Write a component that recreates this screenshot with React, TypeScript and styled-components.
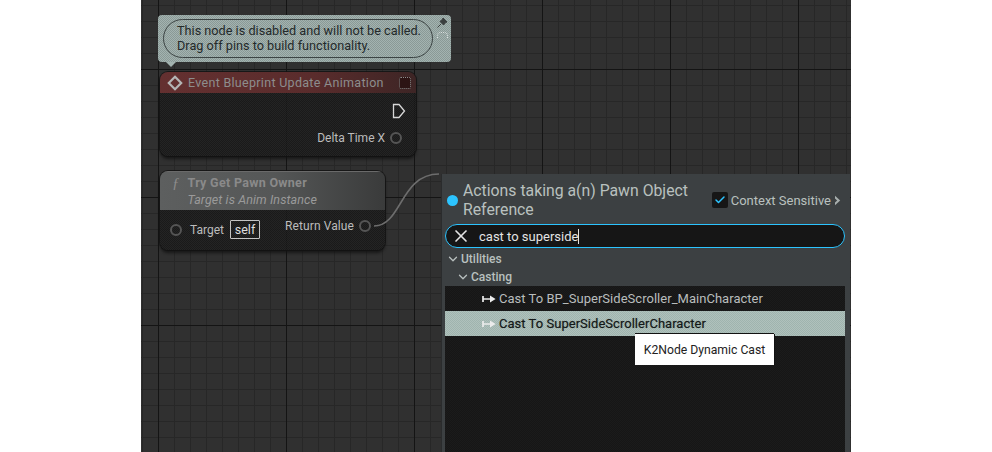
import React from "react";
import styled, { createGlobalStyle, css } from "styled-components";
import { Check, ChevronDown, X } from "lucide-react";

const GlobalStyle = createGlobalStyle`
  html, body {
    margin: 0;
    padding: 0;
    background: #fff;
    overflow: hidden;
  }
  body {
    font-family: Roboto, "Liberation Sans", sans-serif;
  }
`;

const dither = (shade: string) => css`
  background-image: repeating-conic-gradient(${shade} 0 25%, transparent 0 50%);
  background-size: 2px 2px;
`;

function ExecPin() {
  return (
    <ExecSvg width="14" height="16" viewBox="0 0 14 16">
      <path d="M1.5 1.5h5.5l5.5 6.5-5.5 6.5H1.5z" fill="none" stroke="#d8d8d8" strokeWidth="1.3" />
    </ExecSvg>
  );
}

function CastIcon() {
  return (
    <svg width="14" height="8" viewBox="0 0 14 8">
      <path d="M1 1v6M1 4h8" stroke="#ececec" strokeWidth="1.7" fill="none" />
      <path d="M8 .4 13.6 4 8 7.6z" fill="#ececec" />
    </svg>
  );
}

function EventIcon() {
  return (
    <svg width="16" height="16" viewBox="0 0 16 16">
      <path d="M8 1.8 14.2 8 8 14.2 1.8 8z" fill="none" stroke="#b4b4b4" strokeWidth="2.2" />
    </svg>
  );
}

function PinIcon() {
  return (
    <svg width="12" height="12" viewBox="0 0 12 12">
      <path d="M7 1l4 4-1.5.6L7.6 8 4 4.4 6.4 2.5zM5 7l-3.5 3.5" fill="#3b3f3f" stroke="#3b3f3f" strokeWidth="1" />
    </svg>
  );
}

function DoubleArrow() {
  return (
    <svg width="7" height="11" viewBox="0 0 7 11">
      <path d="M1 .8 6.2 5.5 1 10.2z" fill="#a8afae" />
      <path d="M1 3.4 3.2 5.5 1 7.6z" fill="#3c4042" />
    </svg>
  );
}

function Wire() {
  return (
    <WireSvg width="80" height="60" viewBox="0 0 80 60">
      <path d="M4 54C32 54 30 2 69 2" fill="none" stroke="#6d6d6d" strokeWidth="1.6" />
    </WireSvg>
  );
}

export default function App() {
  return (
    <>
      <GlobalStyle />
      <Page>
        <Canvas>
          <CommentBubble>
            <CommentPill>
              This node is disabled and will not be called.
              <br />
              Drag off pins to build functionality.
            </CommentPill>
            <CommentPin>
              <PinIcon />
              <PinBase />
            </CommentPin>
          </CommentBubble>

          <EventNode>
            <EventHeader>
              <EventIcon />
              <HeaderTitle>Event Blueprint Update Animation</HeaderTitle>
              <DelegateBox />
            </EventHeader>
            <EventBody>
              <ExecPin />
              <PinRow>
                Delta Time X <Pin />
              </PinRow>
            </EventBody>
          </EventNode>

          <FunctionNode>
            <FunctionHeader>
              <FunctionGlyph>ƒ</FunctionGlyph>
              <FunctionText>
                <FunctionTitle>Try Get Pawn Owner</FunctionTitle>
                <FunctionSub>Target is Anim Instance</FunctionSub>
              </FunctionText>
            </FunctionHeader>
            <FunctionBody>
              <TargetRow>
                <Pin /> Target <SelfTag>self</SelfTag>
              </TargetRow>
              <ReturnRow>
                Return Value <Pin />
              </ReturnRow>
            </FunctionBody>
          </FunctionNode>

          <Wire />

          <ActionMenu>
            <MenuHeader>
              <Dot />
              <MenuTitle>Actions taking a(n) Pawn Object Reference</MenuTitle>
              <ContextToggle>
                <CheckBox>
                  <Check size={12} strokeWidth={3} color="#2cc4ff" />
                </CheckBox>
                Context Sensitive
                <DoubleArrow />
              </ContextToggle>
            </MenuHeader>
            <SearchBox>
              <X size={20} strokeWidth={2} color="#e4e4e4" />
              <SearchText>cast to superside</SearchText>
              <Caret />
            </SearchBox>
            <TreeRow>
              <ChevronDown size={14} strokeWidth={2.2} />
              Utilities
            </TreeRow>
            <TreeRow $indent={10}>
              <ChevronDown size={14} strokeWidth={2.2} />
              Casting
            </TreeRow>
            <ResultList>
              <ResultRow>
                <CastIcon />
                Cast To BP_SuperSideScroller_MainCharacter
              </ResultRow>
              <ResultRow $selected>
                <CastIcon />
                Cast To SuperSideScrollerCharacter
              </ResultRow>
              <Tooltip>K2Node Dynamic Cast</Tooltip>
            </ResultList>
          </ActionMenu>
        </Canvas>
      </Page>
    </>
  );
}

const Page = styled.div`
  width: 992px;
  height: 452px;
  padding-left: 141px;
  box-sizing: border-box;
`;

const Canvas = styled.div`
  position: relative;
  width: 710px;
  height: 452px;
  overflow: hidden;
  background-color: #303030;
  background-image:
    linear-gradient(90deg, #141414 1px, transparent 1px),
    linear-gradient(#141414 1px, transparent 1px),
    linear-gradient(90deg, #272727 1px, transparent 1px),
    linear-gradient(#272727 1px, transparent 1px);
  background-size: 128px 128px, 128px 128px, 16px 16px, 16px 16px;
  background-position: 17px 0, 0 69px, 1px 0, 0 5px;
`;

const CommentBubble = styled.div`
  position: absolute;
  left: 17px;
  top: 15px;
  width: 293px;
  height: 47px;
  box-sizing: border-box;
  padding: 4px 0 0 5px;
  border-radius: 4px;
  background-color: #a3b3b0;
  ${dither("rgba(50, 60, 60, 0.22)")}

  &::after {
    content: "";
    position: absolute;
    left: 8px;
    bottom: -5px;
    border-left: 5px solid transparent;
    border-right: 5px solid transparent;
    border-top: 5px solid #a3b3b0;
  }
`;

const CommentPill = styled.div`
  width: 270px;
  height: 39px;
  box-sizing: border-box;
  padding: 3px 0 0 13px;
  border: 1px solid #3c4444;
  border-radius: 20px;
  font-size: 12.7px;
  line-height: 15px;
  color: #23292a;
  white-space: nowrap;
`;

const CommentPin = styled.div`
  position: absolute;
  right: 3px;
  top: 2px;
  display: flex;
  flex-direction: column;
  align-items: center;
  gap: 3px;
`;

const PinBase = styled.div`
  width: 9px;
  height: 5px;
  border: 1px dotted #d9dfde;
  border-bottom: none;
  border-radius: 4px 4px 0 0;
`;

const nodeShell = css`
  position: absolute;
  box-sizing: border-box;
  border-radius: 8px;
  overflow: hidden;
  background-color: rgba(22, 22, 22, 0.82);
  box-shadow: 0 0 0 1px rgba(18, 18, 18, 0.8), 0 3px 3px rgba(18, 18, 18, 0.8);
`;

const EventNode = styled.div`
  ${nodeShell}
  left: 19px;
  top: 72px;
  width: 256px;
  height: 84px;
  display: flex;
  flex-direction: column;
`;

const EventHeader = styled.div`
  display: flex;
  align-items: center;
  gap: 5px;
  height: 21px;
  padding: 0 5px 0 7px;
  background: linear-gradient(90deg, #643030 0%, #5a2c2c 60%, #3d2525 100%);
`;

const HeaderTitle = styled.span`
  flex: 1;
  font-size: 12.5px;
  letter-spacing: 0.3px;
  color: #8d8d8d;
  white-space: nowrap;
`;

const DelegateBox = styled.div`
  width: 10px;
  height: 10px;
  border: 1px dotted #8d8d8d;
  border-radius: 2px;
  background: #2c1414;
`;

const EventBody = styled.div`
  flex: 1;
  display: flex;
  flex-direction: column;
  align-items: flex-end;
  gap: 12px;
  padding: 10px 14px 0 0;
  ${dither("rgba(60, 60, 60, 0.3)")}
`;

const ExecSvg = styled.svg`
  margin-right: -4px;
`;

const PinRow = styled.div`
  display: flex;
  align-items: center;
  gap: 5px;
  font-size: 12px;
  color: #bcbcbc;
  white-space: nowrap;
`;

const TargetRow = styled(PinRow)`
  gap: 8px;
`;

const ReturnRow = styled(PinRow)`
  margin-top: -1px;
  letter-spacing: 0.1px;
`;

const Pin = styled.span`
  display: inline-block;
  width: 12px;
  height: 12px;
  box-sizing: border-box;
  border: 2px solid #555;
  border-radius: 50%;
`;

const FunctionNode = styled.div`
  ${nodeShell}
  left: 19px;
  top: 171px;
  width: 225px;
  height: 79px;
`;

const FunctionHeader = styled.div`
  display: flex;
  gap: 8px;
  height: 39px;
  box-sizing: border-box;
  padding: 3px 8px 0 12px;
  border-top: 1px solid #6a6a6a;
  background: linear-gradient(90deg, #5d5f5f 0%, #555757 50%, #3a3b3b 100%);
`;

const FunctionGlyph = styled.span`
  font-family: "Liberation Serif", serif;
  font-style: italic;
  font-size: 15px;
  color: #8c8c8c;
`;

const FunctionText = styled.div`
  display: flex;
  flex-direction: column;
  gap: 2px;
  white-space: nowrap;
`;

const FunctionTitle = styled.span`
  font-size: 12.5px;
  font-weight: 700;
  letter-spacing: 0.3px;
  color: #8a8a8a;
`;

const FunctionSub = styled.span`
  font-size: 12.5px;
  font-style: italic;
  letter-spacing: 0.1px;
  color: #9a9a9a;
`;

const FunctionBody = styled.div`
  display: flex;
  justify-content: space-between;
  align-items: flex-start;
  padding: 10px 14px 0 10px;
  ${dither("rgba(60, 60, 60, 0.3)")}
  height: 40px;
  box-sizing: border-box;
`;

const SelfTag = styled.span`
  margin-left: -2px;
  width: 30px;
  box-sizing: border-box;
  padding: 1px 0;
  text-align: center;
  border: 1px solid #c4c4c4;
  border-radius: 1px;
  font-size: 12.5px;
  line-height: 15px;
  color: #dedede;
`;

const WireSvg = styled.svg`
  position: absolute;
  left: 229px;
  top: 172px;
`;

const ActionMenu = styled.div`
  position: absolute;
  left: 300px;
  top: 174px;
  width: 409px;
  height: 278px;
  box-sizing: border-box;
  padding: 0 5px 0 3px;
  display: flex;
  flex-direction: column;
  background-color: #3c4042;
  border-left: 1px solid #2a2c2d;
`;

const MenuHeader = styled.div`
  display: flex;
  align-items: center;
  height: 50px;
  box-sizing: border-box;
  padding: 2px 0 0 2px;
`;

const Dot = styled.span`
  flex: none;
  width: 11px;
  height: 11px;
  border-radius: 50%;
  background: #2cc4ff;
  margin-right: 5px;
`;

const MenuTitle = styled.div`
  width: 248px;
  font-size: 15.8px;
  line-height: 19px;
  color: #b9c0bf;
`;

const ContextToggle = styled.div`
  display: flex;
  align-items: center;
  gap: 3px;
  margin-left: auto;
  padding-right: 4px;
  font-size: 13px;
  color: #b9c0bf;
  white-space: nowrap;
`;

const CheckBox = styled.span`
  display: flex;
  align-items: center;
  justify-content: center;
  width: 16px;
  height: 16px;
  border-radius: 2px;
  background: #161616;
`;

const SearchBox = styled.div`
  display: flex;
  align-items: center;
  height: 24px;
  box-sizing: border-box;
  padding-left: 5px;
  border: 1px solid #2cc4ff;
  border-radius: 12px;
  background: #161616;
`;

const SearchText = styled.span`
  margin-left: 8px;
  font-size: 13px;
  color: #e4e4e4;
`;

const Caret = styled.span`
  width: 1px;
  height: 15px;
  background: #e4e4e4;
`;

const TreeRow = styled.div<{ $indent?: number }>`
  display: flex;
  align-items: center;
  gap: 1px;
  height: ${(p) => (p.$indent ? 18 : 20)}px;
  padding-left: ${(p) => (p.$indent ?? 0) + 1}px;
  padding-top: ${(p) => (p.$indent ? 0 : 1)}px;
  box-sizing: border-box;
  font-size: 12px;
  font-weight: 500;
  color: #b9c0bf;
`;

const ResultList = styled.div`
  position: relative;
  flex: 1;
  background-color: #161616;
  ${dither("rgba(40, 40, 40, 0.3)")}
`;

const ResultRow = styled.div<{ $selected?: boolean }>`
  display: flex;
  align-items: center;
  gap: 3px;
  height: 25px;
  padding-left: 37px;
  font-size: 13px;
  letter-spacing: 0.03px;
  color: ${(p) => (p.$selected ? "#141818" : "#b9bdbd")};
  background-color: ${(p) => (p.$selected ? "#9fb4ae" : "transparent")};
  ${(p) =>
    p.$selected &&
    css`
      text-shadow: 0 0 1px rgba(0, 0, 0, 0.4);
      ${dither("rgba(235, 240, 238, 0.22)")}
    `}
`;

const Tooltip = styled.div`
  position: absolute;
  left: 190px;
  top: 48px;
  width: 139px;
  height: 31px;
  display: flex;
  align-items: center;
  justify-content: center;
  background: #fff;
  box-shadow: 0 -1px 0 #111, 1px 0 0 #111;
  font-size: 12.2px;
  color: #222;
  white-space: nowrap;
`;
